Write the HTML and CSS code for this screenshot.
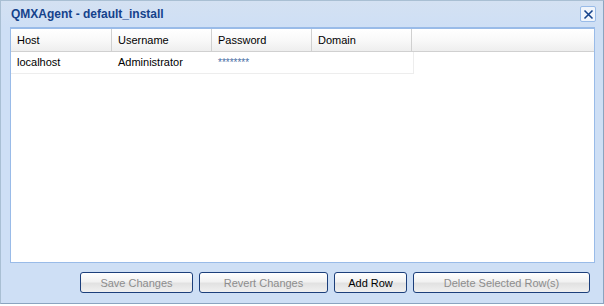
FILE: index.html
```html
<!DOCTYPE html>
<html>
<head>
<meta http-equiv="Content-Type" content="text/html; charset=UTF-8">
<title>QMXAgent - default_install</title>
<link rel="stylesheet" href="styles.css">
</head>
<body>
<div class='window'>
    <div class='window-header'>
        <span class='window-title'>QMXAgent - default_install</span>
        <span class='tool-close'>
            <svg width='11' height='11' viewBox='0 0 11 11'>
                <path d='M1.5 1.5 L9.5 9.5 M9.5 1.5 L1.5 9.5' stroke='#15428b' stroke-width='1.6' fill='none'/>
            </svg>
        </span>
    </div>
    <div class='window-body'>
        <div class='grid'>
            <div class='grid-header'>
                <div class='hd'>Host</div>
                <div class='hd'>Username</div>
                <div class='hd'>Password</div>
                <div class='hd'>Domain</div>
                <div class='hd hd-fill'></div>
            </div>
            <div class='grid-body'>
                <div class='row'>
                    <div class='cell'>localhost</div>
                    <div class='cell'>Administrator</div>
                    <div class='cell cell-pw'>********</div>
                    <div class='cell'></div>
                </div>
            </div>
        </div>
        <div class='toolbar'>
            <button class='btn btn-save' disabled>Save Changes</button>
            <button class='btn btn-revert' disabled>Revert Changes</button>
            <button class='btn btn-add'>Add Row</button>
            <button class='btn btn-delete' disabled>Delete Selected Row(s)</button>
        </div>
    </div>
</div>
</body>
</html>
```
FILE: styles.css
```css
html, body {
    margin: 0;
    padding: 0;
    background: #ffffff;
}

body {
    font-family: "Liberation Sans", Arial, sans-serif;
    font-size: 11px;
}

.window {
    width: 602px;
    height: 302px;
    border: 1px solid #99bbe8;
    border-color: #a9bfd3 #8aa4c0 #8aa4c0 #a9bfd3;
    background: #cedff5;
    display: flex;
    flex-direction: column;
}

.window-header {
    height: 26px;
    display: flex;
    align-items: center;
    justify-content: space-between;
    padding: 0 7px 0 10px;
    background: linear-gradient(#d4e1f2, #cedff5);
}

.window-title {
    color: #15428b;
    font-weight: bold;
    font-size: 12px;
}

.tool-close {
    width: 14px;
    height: 14px;
    border: 1px solid #99bbe8;
    border-radius: 2px;
    background: #f0f5fc;
    display: flex;
    align-items: center;
    justify-content: center;
}

.window-body {
    flex: 1;
    display: flex;
    flex-direction: column;
    padding: 0 8px 10px 9px;
}

.grid {
    height: 233px;
    border: 1px solid #99bbe8;
    border-top: 2px solid #99bbe8;
    background: #ffffff;
}

.grid-header {
    display: flex;
    height: 22px;
    background: linear-gradient(#ffffff, #f9f9f9 50%, #eeeeee);
    border-bottom: 1px solid #d0d0d0;
}

.hd {
    width: 100px;
    border-right: 1px solid #d0d0d0;
    padding: 0 6px;
    line-height: 22px;
    color: #000;
    box-sizing: border-box;
}

.hd:first-child {
    width: 101px;
}

.hd-fill {
    flex: 1;
}

.hd-fill:last-child {
    border-right: none;
}

.row {
    display: flex;
    width: 402px;
    height: 21px;
    border-bottom: 1px solid #ededed;
    border-right: 1px solid #ededed;
}

.cell {
    width: 100px;
    padding: 0 6px;
    line-height: 21px;
    box-sizing: border-box;
}

.cell:first-child {
    width: 101px;
}

.cell-pw {
    color: #4a6fa5;
    font-size: 10px;
}

.toolbar {
    display: flex;
    justify-content: flex-end;
    gap: 6px;
    margin-top: 9px;
    padding-right: 5px;
}

.btn {
    height: 21px;
    border: 1px solid #1c3f7b;
    border-radius: 3px;
    background: linear-gradient(#ffffff, #f2f2f2 45%, #e2e2e2 55%, #f0f0f0);
    font-family: "Liberation Sans", Arial, sans-serif;
    font-size: 11px;
    color: #000;
    padding: 0;
}

.btn:disabled {
    color: #8d8d8d;
}

.btn-save { width: 113px; }
.btn-revert { width: 129px; }
.btn-add { width: 73px; }
.btn-delete { width: 177px; }
```
